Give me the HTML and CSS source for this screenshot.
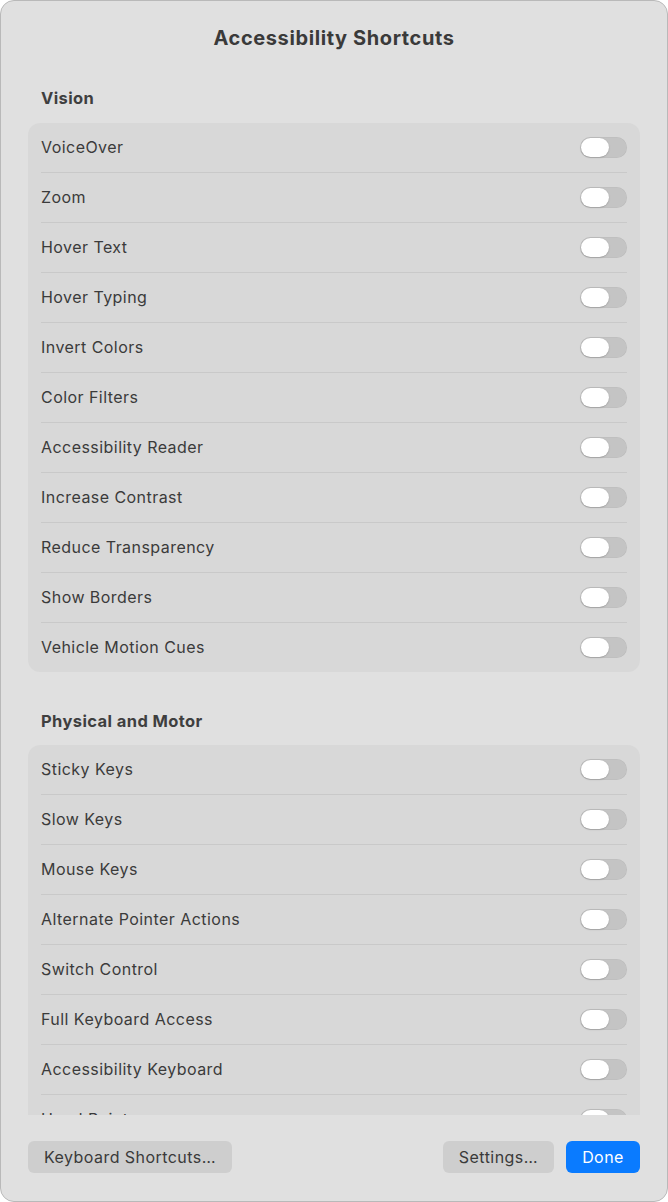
FILE: index.html
```html
<!DOCTYPE html>
<html lang="en">
<head>
<meta charset="utf-8">
<title>Accessibility Shortcuts</title>
<link rel="stylesheet" href="styles.css">
</head>
<body>
<div class="window">
  <div class="title">Accessibility Shortcuts</div>
  <div class="scroll">
    <div class="section">
      <div class="heading">Vision</div>
      <div class="group">
        <div class="row"><span class="label">VoiceOver</span><span class="toggle"><span class="knob"></span></span></div>
        <div class="row"><span class="label">Zoom</span><span class="toggle"><span class="knob"></span></span></div>
        <div class="row"><span class="label">Hover Text</span><span class="toggle"><span class="knob"></span></span></div>
        <div class="row"><span class="label">Hover Typing</span><span class="toggle"><span class="knob"></span></span></div>
        <div class="row"><span class="label">Invert Colors</span><span class="toggle"><span class="knob"></span></span></div>
        <div class="row"><span class="label">Color Filters</span><span class="toggle"><span class="knob"></span></span></div>
        <div class="row"><span class="label">Accessibility Reader</span><span class="toggle"><span class="knob"></span></span></div>
        <div class="row"><span class="label">Increase Contrast</span><span class="toggle"><span class="knob"></span></span></div>
        <div class="row"><span class="label">Reduce Transparency</span><span class="toggle"><span class="knob"></span></span></div>
        <div class="row"><span class="label">Show Borders</span><span class="toggle"><span class="knob"></span></span></div>
        <div class="row"><span class="label">Vehicle Motion Cues</span><span class="toggle"><span class="knob"></span></span></div>
      </div>
    </div>
    <div class="section">
      <div class="heading">Physical and Motor</div>
      <div class="group">
        <div class="row"><span class="label">Sticky Keys</span><span class="toggle"><span class="knob"></span></span></div>
        <div class="row"><span class="label">Slow Keys</span><span class="toggle"><span class="knob"></span></span></div>
        <div class="row"><span class="label">Mouse Keys</span><span class="toggle"><span class="knob"></span></span></div>
        <div class="row"><span class="label">Alternate Pointer Actions</span><span class="toggle"><span class="knob"></span></span></div>
        <div class="row"><span class="label">Switch Control</span><span class="toggle"><span class="knob"></span></span></div>
        <div class="row"><span class="label">Full Keyboard Access</span><span class="toggle"><span class="knob"></span></span></div>
        <div class="row"><span class="label">Accessibility Keyboard</span><span class="toggle"><span class="knob"></span></span></div>
        <div class="row"><span class="label">Head Pointer</span><span class="toggle"><span class="knob"></span></span></div>
        <div class="row"><span class="label">Dwell Control</span><span class="toggle"><span class="knob"></span></span></div>
      </div>
    </div>
  </div>
  <div class="footer">
    <button class="btn">Keyboard Shortcuts…</button>
    <span class="spacer"></span>
    <button class="btn">Settings…</button>
    <button class="btn primary">Done</button>
  </div>
</div>
</body>
</html>
```

FILE: styles.css
```css
* { box-sizing: border-box; }
html, body {
  margin: 0;
  padding: 0;
  background: #ffffff;
}
body {
  font-family: Inter, "Noto Sans", "Liberation Sans", sans-serif;
  color: #3b3b3b;
}
.window {
  width: 668px;
  height: 1202px;
  border: 1px solid #b9b9b9;
  border-radius: 14px;
  background: #e0e0e0;
  display: flex;
  flex-direction: column;
  overflow: hidden;
}
.title {
  padding-top: 25px;
  height: 50px;
  line-height: 24px;
  font-size: 20px;
  font-weight: 700;
  text-align: center;
  color: #3a3a3a;
  letter-spacing: 0.6px;
}
.scroll {
  flex: 1;
  min-height: 0;
  overflow: hidden;
  padding: 0 27px;
}
.section { margin-top: 37px; }
.section + .section { margin-top: 39px; }
.heading {
  height: 20px;
  line-height: 20px;
  padding-left: 13px;
  font-size: 16.5px;
  font-weight: 700;
  color: #3f3f3f;
  letter-spacing: 0.4px;
  margin-bottom: 15px;
}
.section + .section .heading { margin-bottom: 14px; }
.group {
  background: #d8d8d8;
  border-radius: 12px;
  padding: 0 13px;
}
.row {
  height: 50px;
  display: flex;
  align-items: center;
  justify-content: space-between;
  border-top: 1px solid #c9c9c9;
  padding-bottom: 2px;
}
.row:first-child {
  border-top: none;
  height: 49px;
}
.label {
  font-size: 16px;
  color: #3b3b3b;
  letter-spacing: 0.45px;
}
.toggle {
  width: 47px;
  height: 21px;
  border-radius: 11px;
  background: #c4c4c4;
  position: relative;
  margin-top: 2px;
  box-shadow: inset 0 0 0 0.5px rgba(0,0,0,0.05);
}
.knob {
  position: absolute;
  left: 1px;
  top: 1px;
  width: 28px;
  height: 19px;
  border-radius: 10px;
  background: #ffffff;
  box-shadow: 0 0.5px 1.5px rgba(0,0,0,0.25);
}
.footer {
  height: 86px;
  padding: 26px 27px 27px;
  display: flex;
  gap: 12px;
  align-items: flex-start;
}
.spacer { flex: 1; }
.btn {
  height: 32px;
  border: none;
  border-radius: 6px;
  background: #cecece;
  color: #3a3a3a;
  font-family: Inter, "Noto Sans", "Liberation Sans", sans-serif;
  font-size: 16px;
  letter-spacing: 0.45px;
  padding: 0 16px 0 16px;
  line-height: 32px;
}
.btn.primary {
  background: #0a7bff;
  color: #ffffff;
  width: 74px;
  padding: 0;
}
```
